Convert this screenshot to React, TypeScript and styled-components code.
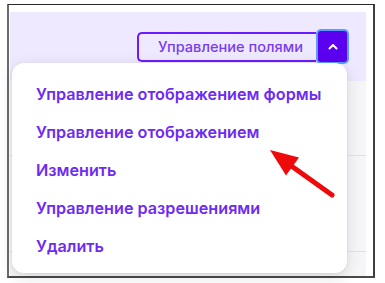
import * as React from 'react';
import styled, { createGlobalStyle } from 'styled-components';

const GlobalStyle = createGlobalStyle`
  html, body {
    margin: 0;
    padding: 0;
    background: #ffffff;
  }
  body {
    font-family: Inter, "Noto Sans", "Liberation Sans", sans-serif;
  }
`;

const Page = styled.div`
  position: relative;
  width: 385px;
  height: 283px;
  overflow: hidden;
`;

const Frame = styled.div`
  box-sizing: border-box;
  margin: 4px 0 0 7px;
  width: 368px;
  height: 274px;
  border-top: 1px solid #2a2a2a;
  border-left: 2px solid #6b6b6b;
  border-right: 2px solid #3d3d3d;
  border-bottom: 2px solid #4a4a4a;
  padding: 7px 7px 0 1px;
  display: flex;
  flex-direction: column;
`;

const Header = styled.div`
  height: 69px;
  background: #efe9ff;
  display: flex;
  justify-content: flex-end;
  align-items: flex-start;
  padding: 17px 19px 0 0;
  box-sizing: border-box;
`;

const ButtonGroup = styled.div`
  display: flex;
  align-items: center;
  height: 35px;
`;

const FieldsButton = styled.button`
  height: 30px;
  box-sizing: border-box;
  border: 2px solid #6a1bff;
  border-right: none;
  border-radius: 5px 0 0 5px;
  background: transparent;
  padding: 0 13px 0 19px;
  font-family: Inter, "Noto Sans", sans-serif;
  font-size: 14.6px;
  font-weight: 500;
  color: #7a3cf0;
  cursor: pointer;
`;

const ToggleButton = styled.button`
  width: 29px;
  height: 31px;
  border: none;
  margin-left: 2px;
  border-radius: 3px;
  background: #5c00f0;
  box-shadow: 0 0 0 2px #5b9dff;
  display: flex;
  align-items: center;
  justify-content: center;
  padding: 0;
  cursor: pointer;
`;

const Table = styled.div`
  flex: 1;
  background: #f6f6f8;
`;

const Row = styled.div<{ $h: number }>`
  height: ${(p) => p.$h}px;
  border-bottom: 1px solid #e2e2e6;
`;

const Menu = styled.ul`
  position: absolute;
  left: 12px;
  top: 63px;
  width: 335px;
  height: 210px;
  box-sizing: border-box;
  margin: 0;
  padding: 12px 0 0 24px;
  list-style: none;
  background: #ffffff;
  border-radius: 12px;
  box-shadow: 0 4px 16px rgba(20, 20, 40, 0.12), 0 1px 3px rgba(20, 20, 40, 0.08);
`;

const MenuItem = styled.li`
  height: 38px;
  display: flex;
  align-items: center;
  font-size: 16.2px;
  font-weight: 600;
  color: #6e2bf2;
  white-space: nowrap;
`;

const Arrow = styled.svg`
  position: absolute;
  left: 0;
  top: 0;
  pointer-events: none;
`;

const items = [
  'Управление отображением формы',
  'Управление отображением',
  'Изменить',
  'Управление разрешениями',
  'Удалить',
];

export default function App(): JSX.Element {
  return (
    <Page>
      <GlobalStyle />
      <Frame>
        <Header>
          <ButtonGroup>
            <FieldsButton>Управление полями</FieldsButton>
            <ToggleButton>
              <svg width="10" height="7" viewBox="0 0 10 7">
                <path d="M1.5 5.5 L5 2 L8.5 5.5" fill="none" stroke="#fff" strokeWidth="2" strokeLinecap="round" strokeLinejoin="round" />
              </svg>
            </ToggleButton>
          </ButtonGroup>
        </Header>
        <Table>
          <Row $h={74} />
          <Row $h={95} />
        </Table>
      </Frame>
      <Menu>
        {items.map((t) => (
          <MenuItem key={t}>{t}</MenuItem>
        ))}
      </Menu>
      <Arrow width="385" height="283" viewBox="0 0 385 283">
        <line x1="332" y1="195" x2="290" y2="165" stroke="#ee0a0a" strokeWidth="5" strokeLinecap="round" />
        <polygon points="270,150 299,157.6 286,175.4" fill="#ee0a0a" />
      </Arrow>
    </Page>
  );
}
